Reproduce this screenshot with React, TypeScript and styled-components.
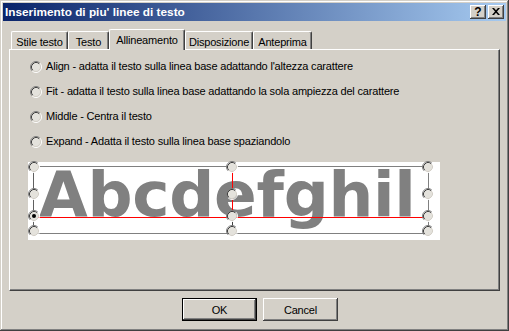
import React from "react";
import styled, { createGlobalStyle } from "styled-components";

const Global = createGlobalStyle`
  html, body { margin: 0; padding: 0; background: #d4d0c8; }
  * { box-sizing: border-box; }
`;

const Window = styled.div`
  width: 509px;
  height: 331px;
  padding: 3px;
  background: #d4d0c8;
  box-shadow: inset -1px -1px #404040, inset 1px 1px #d4d0c8,
    inset -2px -2px #808080, inset 2px 2px #ffffff;
  display: flex;
  flex-direction: column;
  font-family: "Liberation Sans", Arial, sans-serif;
  font-size: 11px;
  letter-spacing: -0.18px;
  color: #000;
`;

const TitleBar = styled.div`
  height: 18px;
  padding: 0 2px;
  display: flex;
  align-items: center;
  justify-content: space-between;
  background: linear-gradient(to right, #0a246a, #a6caf0);
`;

const TitleText = styled.div`
  color: #fff;
  font-weight: bold;
  font-size: 11.8px;
  letter-spacing: 0;
  line-height: 18px;
  white-space: nowrap;
`;

const CaptionButtons = styled.div`
  display: flex;
  gap: 2px;
`;

const CaptionButton = styled.div`
  width: 16px;
  height: 14px;
  background: #d4d0c8;
  box-shadow: inset -1px -1px #404040, inset 1px 1px #ffffff,
    inset -2px -2px #808080, inset 2px 2px #d4d0c8;
  display: flex;
  align-items: center;
  justify-content: center;
  font-weight: bold;
  font-size: 12px;
  line-height: 14px;
  letter-spacing: 0;
  padding-bottom: 1px;
`;

const Body = styled.div`
  flex: 1;
  padding: 8px 6px 0 6px;
  display: flex;
  flex-direction: column;
`;

const TabRow = styled.div`
  height: 20px;
  padding-left: 2px;
  display: flex;
  align-items: flex-start;
  position: relative;
  z-index: 1;
`;

const Tab = styled.div<{ $w: number; $active?: boolean }>`
  width: ${(p) => p.$w}px;
  height: ${(p) => (p.$active ? 21 : 18)}px;
  margin-top: ${(p) => (p.$active ? 0 : 2)}px;
  background: #d4d0c8;
  border-top: 1px solid #ffffff;
  border-left: 1px solid #ffffff;
  border-right: 1px solid #404040;
  border-radius: 2px 2px 0 0;
  box-shadow: inset -1px 0 #808080;
  padding-top: 2px;
  text-align: center;
  line-height: 16px;
  white-space: nowrap;
`;

const Panel = styled.div`
  height: 242px;
  border-top: 1px solid #ffffff;
  border-left: 1px solid #ffffff;
  border-right: 1px solid #404040;
  border-bottom: 1px solid #404040;
  box-shadow: inset -1px -1px #808080;
  padding: 10px 0 0 20px;
  display: flex;
  flex-direction: column;
`;

const OptionList = styled.div`
  display: flex;
  flex-direction: column;
  gap: 12px;
`;

const Option = styled.label`
  height: 13px;
  display: flex;
  align-items: center;
  gap: 4px;
  line-height: 13px;
  white-space: nowrap;
`;

const RadioSvg = styled.svg`
  width: 12px;
  height: 12px;
  flex: none;
  display: block;
`;

const Preview = styled.div`
  margin-top: 14px;
  margin-left: -2px;
  width: 412px;
  height: 78px;
  background: #ffffff;
  position: relative;
`;

const SampleText = styled.div`
  padding: 1px 0 0 11px;
  font-family: "DejaVu Sans", Verdana, sans-serif;
  font-weight: bold;
  font-size: 63px;
  line-height: 63px;
  letter-spacing: -0.3px;
  color: #808080;
  white-space: nowrap;
`;

const Overlay = styled.svg`
  position: absolute;
  left: 0;
  top: 0;
  width: 412px;
  height: 78px;
  overflow: visible;
`;

const ButtonRow = styled.div`
  margin-top: 7px;
  padding-left: 173px;
  display: flex;
  gap: 6px;
`;

const Button = styled.button<{ $default?: boolean }>`
  width: 75px;
  height: 23px;
  padding: 0;
  background: #d4d0c8;
  font-family: "Liberation Sans", Arial, sans-serif;
  font-size: 11px;
  letter-spacing: -0.18px;
  color: #000;
  border: ${(p) => (p.$default ? "1px solid #000" : "none")};
  box-shadow: inset -1px -1px #404040, inset 1px 1px #ffffff,
    inset -2px -2px #808080, inset 2px 2px #d4d0c8;
`;

const FILL = "#e4e2dc";

const RadioMark = ({ x = 0, y = 0, checked = false }: { x?: number; y?: number; checked?: boolean }) => (
  <g transform={`translate(${x} ${y})`}>
    <circle cx="6" cy="6" r="4.5" fill={FILL} />
    <path d="M2.11 9.89 A5.5 5.5 0 0 1 9.89 2.11" stroke="#808080" fill="none" />
    <path d="M9.89 2.11 A5.5 5.5 0 0 1 2.11 9.89" stroke="#ffffff" fill="none" />
    <path d="M2.82 9.18 A4.5 4.5 0 0 1 9.18 2.82" stroke="#404040" fill="none" />
    <path d="M9.18 2.82 A4.5 4.5 0 0 1 2.82 9.18" stroke="#d4d0c8" fill="none" />
    {checked && <circle cx="6" cy="6" r="2" fill="#000" />}
  </g>
);

const Radio = () => (
  <RadioSvg viewBox="0 0 12 12">
    <RadioMark />
  </RadioSvg>
);

const options = [
  "Align - adatta il testo sulla linea base adattando l'altezza carattere",
  "Fit - adatta il testo sulla linea base adattando la sola ampiezza del carattere",
  "Middle - Centra il testo",
  "Expand - Adatta il testo sulla linea base spaziandolo",
];

const tabs = [
  { label: "Stile testo", w: 57 },
  { label: "Testo", w: 41 },
  { label: "Allineamento", w: 76, active: true },
  { label: "Disposizione", w: 68 },
  { label: "Anteprima", w: 59 },
];

const cols = [0, 198, 394];
const rows = [-1, 26, 48, 63];

export default function App() {
  return (
    <>
      <Global />
      <Window>
        <TitleBar>
          <TitleText>Inserimento di piu' linee di testo</TitleText>
          <CaptionButtons>
            <CaptionButton>?</CaptionButton>
            <CaptionButton>
              <svg width="8" height="7" viewBox="0 0 8 7">
                <path d="M0 0h2l2 2.3 2-2.3h2L5 3.5 8 7H6L4 4.7 2 7H0l3-3.5z" fill="#000" />
              </svg>
            </CaptionButton>
          </CaptionButtons>
        </TitleBar>
        <Body>
          <TabRow>
            {tabs.map((t) => (
              <Tab key={t.label} $w={t.w} $active={t.active}>
                {t.label}
              </Tab>
            ))}
          </TabRow>
          <Panel>
            <OptionList>
              {options.map((o) => (
                <Option key={o}>
                  <Radio />
                  <span>{o}</span>
                </Option>
              ))}
            </OptionList>
            <Preview>
              <SampleText>Abcdefghil</SampleText>
              <Overlay viewBox="0 0 412 78">
                <line x1="6" y1="4.5" x2="400" y2="4.5" stroke="#808080" />
                <line x1="6" y1="71.5" x2="400" y2="71.5" stroke="#808080" />
                <line x1="6" y1="55.5" x2="400" y2="55.5" stroke="#ff0000" />
                <line x1="5.5" y1="5" x2="5.5" y2="70" stroke="#606060" />
                <line x1="204.5" y1="5" x2="204.5" y2="55" stroke="#ff0000" />
                <line x1="204.5" y1="55" x2="204.5" y2="70" stroke="#404040" />
                <line x1="400.5" y1="5" x2="400.5" y2="70" stroke="#808080" />
                {rows.map((ry, ri) =>
                  cols.map((cx) => (
                    <RadioMark key={`${ri}-${cx}`} x={cx} y={ry} checked={ri === 2 && cx === 0} />
                  ))
                )}
              </Overlay>
            </Preview>
          </Panel>
          <ButtonRow>
            <Button $default>OK</Button>
            <Button>Cancel</Button>
          </ButtonRow>
        </Body>
      </Window>
    </>
  );
}
